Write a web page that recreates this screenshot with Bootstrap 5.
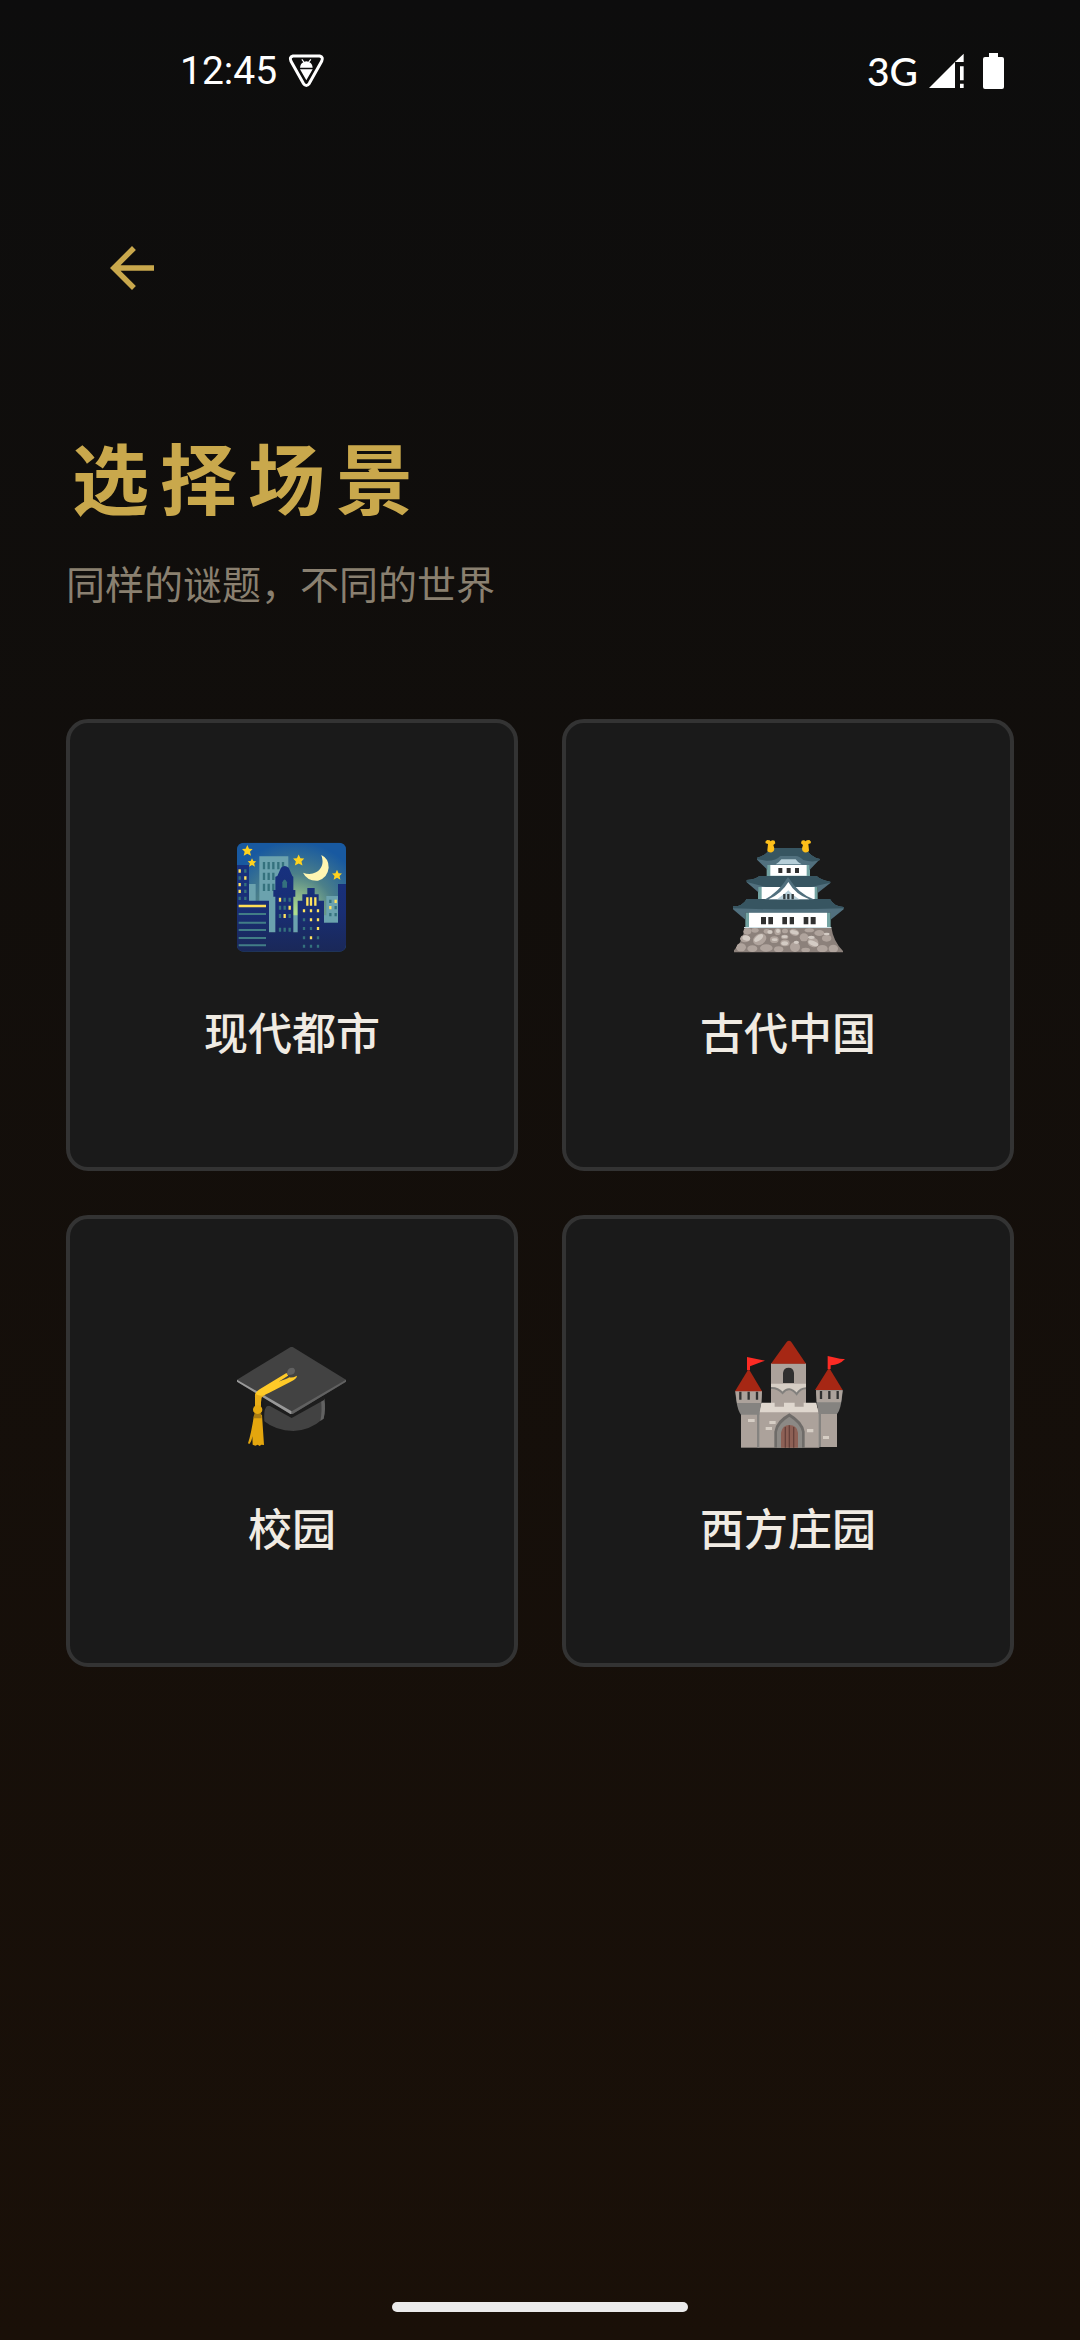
<!DOCTYPE html>
<html lang="zh-CN">
<head>
<meta charset="utf-8">
<meta name="viewport" content="width=device-width, initial-scale=1">
<title>选择场景</title>
<link href="https://cdn.jsdelivr.net/npm/bootstrap@5.3.0/dist/css/bootstrap.min.css" rel="stylesheet">
<style>
  body {
    font-family: Roboto, "Noto Sans CJK SC", sans-serif;
    color: #f0ebe3;
    background: linear-gradient(#0d0d0d, #1a1008) fixed;
  }
  svg { display: block; flex: none; }
  .status-bar { height: 136px; padding: 6px 76px 0 180px; font-size: 39px; line-height: 44px; color: #fff; }
  .status-icons { gap: 11px; }
  .network { font-family: Lato, Roboto, sans-serif; font-weight: 500; }
  .battery { margin-left: 8px; }
  .page-main { padding: 66px; }
  .back-btn { width: 132px; height: 132px; padding: 33px; border: 0; border-radius: 50%; background: none; color: #c9a84c; }
  .page-title { margin: 93px 0 0; font-size: 77px; line-height: 112px; font-weight: 700; letter-spacing: 11px; text-indent: 6px; color: #c9a84c; }
  .page-note { margin: 19px 0 0; font-size: 39px; line-height: 56px; font-weight: 400; color: #8a8070; }
  .scene-grid { --bs-gutter-x: 44px; --bs-gutter-y: 44px; margin-top: 61px; }
  .scene-card {
    aspect-ratio: 1; padding: 2px 0 0; gap: 33px;
    border: 4px solid #333; border-radius: 22px;
    background: #1a1a1a; color: #f0ebe3;
    font-size: 44px; line-height: 64px; font-weight: 500;
  }
  .home-bar { width: 296px; height: 10px; margin-bottom: 28px; background: #ebebeb; }
</style>
</head>
<body class="min-vh-100 d-flex flex-column">

<header class="status-bar d-flex align-items-center justify-content-between">
  <div class="d-flex align-items-center status-icons">
    <span>12:45</span>
    <svg width="37" height="36" viewBox="0 0 111 108" aria-hidden="true">
      <path d="M15 9H95Q107 12 101 25L64 91Q55 104 46 91L9 25Q3 12 15 9Z" fill="none" stroke="#fff" stroke-width="9" stroke-linejoin="round"/>
      <path d="M36 44Q38 31 46 28L40 20L43 18L49 26Q55 24 61 26L67 18L70 20L64 28Q73 32 74 44ZM36 49H74L55 82Z" fill="#fff"/>
    </svg>
  </div>
  <div class="d-flex align-items-center status-icons">
    <span class="network">3G</span>
    <svg width="35" height="36" viewBox="0 0 105 108" fill="#fff" aria-hidden="true">
      <path d="M0 105L78 27V105ZM78 27L104 2V27ZM93 40H104V82H93ZM93 92H104V105H93Z"/>
    </svg>
    <svg class="battery" width="21" height="36" viewBox="0 0 21 36" fill="#fff" aria-hidden="true">
      <path d="M6 0H15V4H19Q21 4 21 6V34Q21 36 19 36H2Q0 36 0 34V6Q0 4 2 4H6Z"/>
    </svg>
  </div>
</header>

<main class="page-main flex-grow-1">
  <button type="button" class="back-btn btn d-block" aria-label="返回">
    <svg width="66" height="66" viewBox="0 0 24 24" fill="currentColor"><path d="M20 11H7.83l5.59-5.59L12 4l-8 8 8 8 1.41-1.41L7.83 13H20v-2z"/></svg>
  </button>
  <h1 class="page-title">选择场景</h1>
  <p class="page-note">同样的谜题，不同的世界</p>

  <div class="scene-grid row row-cols-2">
    <div class="col">
      <button type="button" class="scene-card btn w-100 d-flex flex-column align-items-center justify-content-center">
        <svg width="145" height="145" viewBox="0 0 435 435" aria-hidden="true">
          <defs>
            <radialGradient id="sky" gradientUnits="userSpaceOnUse" cx="225" cy="265" r="215">
              <stop offset="0" stop-color="#aee08e"/><stop offset=".25" stop-color="#8cb88a"/><stop offset=".55" stop-color="#4c8089"/><stop offset="1" stop-color="#1859a0"/>
            </radialGradient>
            <linearGradient id="town" gradientUnits="userSpaceOnUse" x1="0" y1="120" x2="0" y2="380">
              <stop offset="0" stop-color="#17317f"/><stop offset=".55" stop-color="#192e73"/><stop offset="1" stop-color="#1a2858"/>
            </linearGradient>
            <clipPath id="tile"><rect x="51" y="53" width="327" height="327" rx="20"/></clipPath>
            <path id="star" d="M0-17L5-6L16-5L8 3L11 15L0 9L-11 15L-8 3L-16-5L-5-6Z" fill="#ffd21f"/>
          </defs>
          <g clip-path="url(#tile)">
            <rect x="51" y="53" width="327" height="327" fill="url(#sky)"/>
            <path d="M87 177H107V240H87ZM118 94H205V322H118ZM215 271H236V322H215ZM319 213H356V293H310V271H319Z" fill="#6ba2ae"/>
            <path d="M132 111v22M146 111v22M160 111v22M175 111v22M189 111v22M132 143v22M146 143v22M160 143v22M132 176v22M146 176v22M160 176v22" stroke="#34717d" stroke-width="7"/>
            <path d="M51 120H87V227H147V322H166V215H160V195H166V155L172 153L183 128Q194 118 206 128L217 153L220 155V195H226V215H220V322H233V227H247V208H262V189H284V208H296V227H312V293H354V177H378V380H51Z" fill="url(#town)"/>
            <path d="M187 188V172Q194 155 201 172V188Z" fill="#34717d"/>
            <path d="M56 267H138M56 293H138M56 315H138M56 339H138M56 361H138" stroke="#417d86" stroke-width="6"/>
            <path d="M56 243H138" stroke="#ffdd55" stroke-width="7"/>
            <path d="M76 133v10M59 154v10M76 174v10M76 194v10M59 215v10M76 215v10M194 218v12M209 218v12M180 242v12M194 242v12M180 267v12M209 267v12M180 308v12M194 308v12M209 308v12M252 280v9M252 306v9M273 306v9M252 334v9M294 334v9M252 359v9M273 359v9M294 359v9M331 224v10M347 243v10M331 264v10M347 264v10" stroke="#34717d" stroke-width="7"/>
            <path d="M59 133v10M76 154v10M59 174v10M59 194v10M180 218v12M209 242v12M194 267v12M252 253v9M273 253v9M294 253v9M273 280v9M294 280v9M294 306v9M273 334v9M262 217v25M273 217v25M286 217v25M347 224v10M331 243v10" stroke="#ffe35f" stroke-width="7"/>
            <use href="#star" x="82" y="77"/><use href="#star" transform="translate(96 113) scale(.8)"/>
            <use href="#star" transform="translate(236 106) scale(1.05)"/><use href="#star" transform="translate(351 150) scale(.93)"/>
            <path d="M304 90Q327 101 326 128Q323 158 294 167Q262 169 249 143Q270 151 288 142Q316 126 304 90Z" fill="#fff6b2"/>
          </g>
        </svg>
        <span>现代都市</span>
      </button>
    </div>

    <div class="col">
      <button type="button" class="scene-card btn w-100 d-flex flex-column align-items-center justify-content-center">
        <svg width="145" height="145" viewBox="0 0 435 435" aria-hidden="true">
          <clipPath id="wall"><path d="M86 307H346L381 382H54Z"/></clipPath>
          <path d="M86 307H346Q352 350 381 378V382H54V376Q82 348 86 307Z" fill="#8c817b"/>
          <g clip-path="url(#wall)">
            <g fill="#b0a49d">
              <ellipse cx="94" cy="319" rx="12" ry="10"/><ellipse cx="117" cy="316" rx="11" ry="7"/><ellipse cx="87" cy="341" rx="15" ry="11"/><ellipse cx="131" cy="343" rx="21" ry="16" transform="rotate(-30 131 343)"/><ellipse cx="152" cy="319" rx="9" ry="7"/><ellipse cx="185" cy="320" rx="10" ry="10"/><ellipse cx="175" cy="344" rx="13" ry="10"/><ellipse cx="207" cy="318" rx="9" ry="7"/><ellipse cx="235" cy="322" rx="15" ry="10" transform="rotate(20 235 322)"/><ellipse cx="206" cy="336" rx="11" ry="7"/><ellipse cx="207" cy="354" rx="14" ry="10"/><ellipse cx="264" cy="337" rx="13" ry="12"/><ellipse cx="280" cy="316" rx="14" ry="6"/><ellipse cx="310" cy="324" rx="15" ry="9"/><ellipse cx="291" cy="352" rx="17" ry="14" transform="rotate(25 291 352)"/><ellipse cx="332" cy="340" rx="14" ry="10"/><ellipse cx="75" cy="367" rx="15" ry="12"/><ellipse cx="109" cy="371" rx="15" ry="10"/><ellipse cx="151" cy="369" rx="19" ry="11"/><ellipse cx="188" cy="373" rx="14" ry="9"/><ellipse cx="237" cy="366" rx="15" ry="15"/><ellipse cx="269" cy="375" rx="13" ry="7"/><ellipse cx="319" cy="371" rx="16" ry="11"/><ellipse cx="352" cy="371" rx="14" ry="12"/>
            </g>
            <g fill="#d3cbc4">
              <ellipse cx="91" cy="339" rx="12" ry="8" transform="rotate(15 91 339)"/><ellipse cx="128" cy="339" rx="16" ry="8" transform="rotate(-38 128 339)"/><ellipse cx="162" cy="321" rx="8" ry="6"/><ellipse cx="186" cy="318" rx="6" ry="6"/><ellipse cx="176" cy="344" rx="9" ry="4"/><ellipse cx="206" cy="335" rx="9" ry="4"/><ellipse cx="206" cy="355" rx="10" ry="6"/><ellipse cx="235" cy="322" rx="13" ry="6" transform="rotate(15 235 322)"/><ellipse cx="292" cy="355" rx="16" ry="7" transform="rotate(22 292 355)"/><ellipse cx="286" cy="337" rx="10" ry="5"/><ellipse cx="241" cy="352" rx="8" ry="5"/><ellipse cx="332" cy="327" rx="9" ry="4"/>
            </g>
          </g>
          <path d="M88 262H344V308H88Z" fill="#73a3a2"/><path d="M99 262H333V306H99Z" fill="#fff"/><path d="M84 306H346V309H84Z" fill="#cfe0e5"/>
          <path d="M126 185H305V224H126Z" fill="#73a3a2"/><path d="M137 185H296V222H137Z" fill="#fff"/>
          <path d="M152 118H282V153H152Z" fill="#73a3a2"/><path d="M163 118H272V152H163Z" fill="#fff"/>
          <path d="M51 244Q79 245 92 222H342Q354 245 383 246V253L344 284V263H88V284L51 253Z" fill="#51707e"/>
          <path d="M51 244Q79 245 92 222H342Q354 245 383 246V250Q217 256 51 250Z" fill="#375561"/>
          <path d="M92 165Q118 164 130 153H302Q316 166 343 170V174L306 203V186H127V202L92 172Z" fill="#51707e"/>
          <path d="M92 165Q118 164 130 153H302Q316 166 343 170V173L285 186H150L92 171Z" fill="#375561"/>
          <path d="M123 98Q151 91 163 69H269Q282 96 312 102L280 136V120H154V134L123 104Z" fill="#51707e"/>
          <path d="M123 98Q151 91 163 69H269Q282 96 312 102V106Q288 113 262 105Q249 93 240 93H193Q180 108 151 107L123 103Z" fill="#375561"/>
          <path d="M179 118Q189 113 196 103H239Q245 113 257 118Z" fill="#b6ced8"/>
          <path d="M145 224Q187 203 216 156Q248 208 296 224Z" fill="#51707e"/><path d="M158 223Q197 205 217 171Q239 209 280 223Z" fill="#fff"/><path d="M183 223Q205 207 217 196Q227 208 250 223Z" fill="#b6ced8"/>
          <path d="M205 207v16M217 207v16M230 207v16" stroke="#333b3e" stroke-width="7"/>
          <path d="M187 129h12v15h-12ZM212 129h12v15h-12ZM237 129h12v15h-12ZM135 276h15v22h-15ZM157 276h14v22h-14ZM199 276h14v22h-14ZM221 276h13v22h-13ZM263 276h14v22h-14ZM284 276h15v22h-15Z" fill="#303030"/>
          <path id="fish" d="M153 45Q163 45 164 49Q168 44 176 47L178 55L172 60Q179 77 168 82Q154 83 154 76L156 57L149 55L148 50Z" fill="#fdbf1a"/>
          <use href="#fish" transform="matrix(-1 0 0 1 433 0)"/>
        </svg>
        <span>古代中国</span>
      </button>
    </div>

    <div class="col">
      <button type="button" class="scene-card btn w-100 d-flex flex-column align-items-center justify-content-center">
        <svg width="145" height="145" viewBox="0 -12 435 435" aria-hidden="true">
          <path d="M132 240Q135 243 150 241L215 276L312 221Q317 250 311 280Q270 317 220 318Q167 317 133 289Q131 260 137 246Z" fill="#424242"/>
          <path d="M303 225L313 221Q318 252 311 281L301 288Q307 258 303 225Z" fill="#616161"/>
          <path d="M128 218L215 265L312 214V225L215 279L150 243Q139 240 134 255Z" fill="#1d1d1d"/>
          <path d="M51 164L212 66H218L378 164V170L218 266H211L51 170Z" fill="#424242"/>
          <path d="M51 164L215 259V267H211L51 170Z" fill="#999"/>
          <path d="M378 164L215 259V267H218L378 170Z" fill="#616161"/>
          <path d="M105 216Q103 203 119 193L198 145Q206 144 204 152L176 170Q200 162 208 157Q216 160 231 152Q231 161 212 170L148 203Q126 212 124 217L122 245H105Z" fill="#ffca28"/>
          <path d="M105 205Q114 215 138 211Q124 215 124 220L122 245H105Z" fill="#e9ad17"/>
          <path d="M102 270H126L132 360L124 359L119 363L113 359L106 362L98 359L97 334Q95 350 88 357L84 355Q93 329 102 270Z" fill="#e4a60e"/>
          <path d="M103 265H124L125 280H101Z" fill="#a77b13"/>
          <ellipse cx="113" cy="254" rx="14" ry="13" fill="#e5a910"/>
          <path d="M202 150Q199 137 209 130Q222 125 225 135Q225 149 213 149Q204 150 202 150Z" fill="#616161"/>
        </svg>
        <span>校园</span>
      </button>
    </div>

    <div class="col">
      <button type="button" class="scene-card btn w-100 d-flex flex-column align-items-center justify-content-center">
        <svg width="145" height="145" viewBox="0 -12 435 435" aria-hidden="true">
          <path d="M165 115H270V250H165Z" fill="#aca29b"/>
          <path d="M165 116L212 51Q219 44 226 51L270 116Z" fill="#a62714"/>
          <path d="M201 174V144Q203 128 218 128Q232 128 234 144V174Z" fill="#303030"/>
          <path d="M165 176H270V191Q256 190 242 207Q232 194 221 192Q211 192 200 204Q184 189 165 191Z" fill="#d6cec5"/>
          <path d="M165 189Q185 188 200 204Q219 180 242 207Q253 190 270 190" fill="none" stroke="#82807d" stroke-width="6"/>
          <path d="M127 250H310V368H127Z" fill="#aca29b"/>
          <path d="M136 233H176V245H204V233H236V245H263V233H301L307 262H129Z" fill="#dfd7ce"/>
          <g id="tower">
            <path d="M75 265H129V368H75Z" fill="#aca29b"/><path d="M123 265H130V368H123Z" fill="#858380"/>
            <path d="M58 198H138L136 232L130 269H75Q62 255 58 198Z" fill="#858380"/>
            <path d="M58 198H138L136 234H63Z" fill="#aca29b"/>
            <path d="M73 200v24M98 200v24M123 200v24" stroke="#303030" stroke-width="7"/>
          </g>
          <use href="#tower" transform="matrix(-1 0 0 1 438 -2)"/>
          <path d="M57 199L94 138Q98 133 102 138L138 199Z" fill="#a62714"/>
          <path d="M297 195L335 134Q339 129 343 134L380 195Z" fill="#a62714"/>
          <path d="M93 96L147 107L102 124V136H93Z" fill="#fc2b24"/>
          <path d="M335 93L362 99Q374 103 387 102Q371 119 344 121V132H335Z" fill="#fc2b24"/>
          <path d="M175 368V320Q179 287 220 265Q261 289 266 320V368Z" fill="#6f6c69"/>
          <path d="M183 368V320Q188 295 220 275Q252 295 258 320V368Z" fill="#8c8985"/>
          <path d="M195 368V323Q199 300 220 300Q243 300 246 323V368Z" fill="#8d6055"/>
          <path d="M208 306V368M220 301V368M233 306V368" stroke="#65413b" stroke-width="4"/>
          <path d="M96 282h20v9h-20ZM160 288h19v9h-19ZM149 306h19v9h-19ZM273 312h19v10h-19ZM321 333h18v9h-18Z" fill="#d6cec5"/>
        </svg>
        <span>西方庄园</span>
      </button>
    </div>
  </div>
</main>

<footer class="d-flex justify-content-center"><div class="home-bar rounded-pill"></div></footer>

<script src="https://cdn.jsdelivr.net/npm/bootstrap@5.3.0/dist/js/bootstrap.bundle.min.js"></script>
</body>
</html>
